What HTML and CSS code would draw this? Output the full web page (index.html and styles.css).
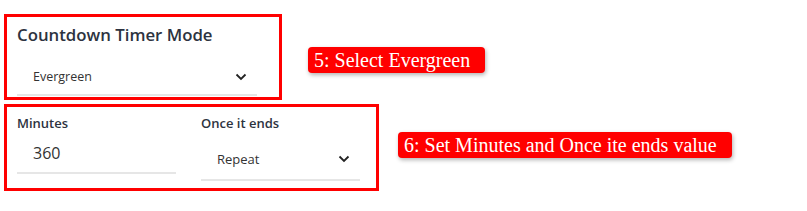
FILE: index.html
```html
<!DOCTYPE html>
<html lang="en">
<head>
    <meta charset="UTF-8">
    <title>Countdown Timer Settings</title>
    <link rel="stylesheet" href="styles.css">
</head>
<body>
    <div class="steps">
        <div class="step-row step-mode">
            <div class="panel panel-mode">
                <h2 class="panel-title">Countdown Timer Mode</h2>
                <div class="select select-mode">
                    <span class="select-value">Evergreen</span>
                    <svg class="chevron" width="12" height="8" viewBox="0 0 12 8"><path d="M1.5 1.5 6 6l4.5-4.5" fill="none" stroke="#222" stroke-width="1.8"/></svg>
                </div>
            </div>
            <div class="note">5: Select Evergreen</div>
        </div>

        <div class="step-row step-values">
            <div class="panel panel-values">
                <div class="field">
                    <label class="field-label">Minutes</label>
                    <div class="input">360</div>
                </div>
                <div class="field">
                    <label class="field-label">Once it ends</label>
                    <div class="select select-end">
                        <span class="select-value">Repeat</span>
                        <svg class="chevron" width="12" height="8" viewBox="0 0 12 8"><path d="M1.5 1.5 6 6l4.5-4.5" fill="none" stroke="#222" stroke-width="1.8"/></svg>
                    </div>
                </div>
            </div>
            <div class="note">6: Set Minutes and Once ite ends value</div>
        </div>
    </div>
</body>
</html>
```

FILE: styles.css
```css
* {
    margin: 0;
    padding: 0;
    box-sizing: border-box;
}

body {
    font-family: 'Open Sans', 'Noto Sans', sans-serif;
    background-color: #fff;
    padding: 14px 0 0 4px;
}

.steps {
    display: flex;
    flex-direction: column;
    gap: 4px;
}

.step-row {
    display: flex;
    align-items: flex-start;
}

.panel {
    border: 3px solid #f00;
    background: #fff;
}

.panel-mode {
    width: 278px;
    height: 86px;
    padding: 7px 0 0 10px;
}

.panel-title {
    font-size: 16.8px;
    font-weight: 600;
    color: #2d3340;
    line-height: 22px;
}

.select {
    display: flex;
    align-items: center;
    justify-content: space-between;
    border-bottom: 2px solid #e6e6e6;
    padding: 0 10px 0 16px;
}

.select-mode {
    width: 240px;
    height: 37px;
    margin-top: 13px;
}

.select-value {
    font-size: 13px;
    color: #333;
}

.select-mode .select-value {
    font-size: 12.5px;
}

.note {
    background-color: #f00;
    color: #fff;
    font-family: 'Liberation Serif', 'Times New Roman', serif;
    font-size: 20px;
    line-height: 26px;
    padding: 0 15px 0 6px;
    border-radius: 4px;
    box-shadow: 1px 2px 4px rgba(0, 0, 0, 0.3);
}

.step-mode .note {
    margin: 33px 0 0 26px;
}

.step-values .note {
    margin: 28px 0 0 19px;
}

.panel-values {
    width: 375px;
    height: 87px;
    padding: 6px 0 0 10px;
    display: flex;
    gap: 25px;
}

.field {
    width: 159px;
}

.field-label {
    display: block;
    font-size: 13px;
    font-weight: 600;
    color: #2d3340;
    line-height: 20px;
}

.input {
    font-size: 16px;
    color: #333;
    padding-left: 16px;
    height: 38px;
    line-height: 34px;
    margin-top: 3px;
    border-bottom: 2px solid #e6e6e6;
}

.select-end {
    height: 38px;
    margin-top: 10px;
    padding-bottom: 4px;
}
```
